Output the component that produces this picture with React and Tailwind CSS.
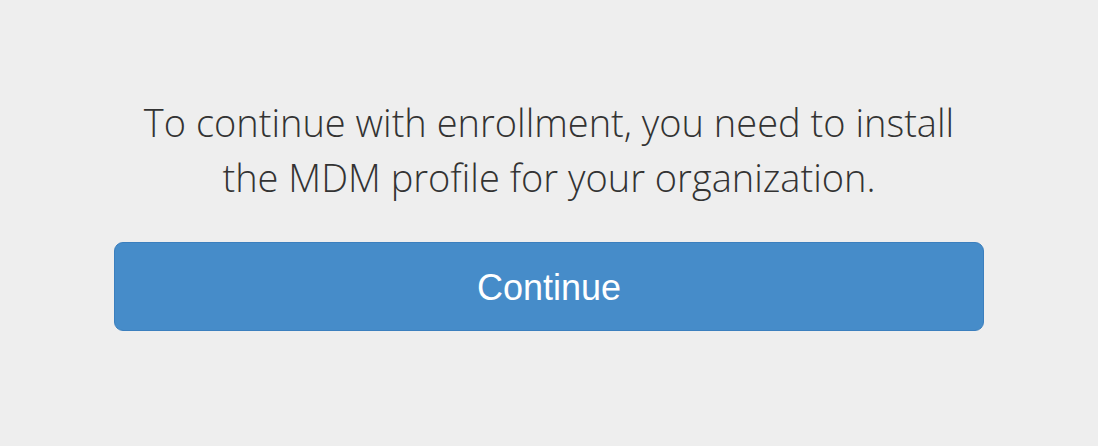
export default function App() {
  return (
    <div className="h-[446px] w-full bg-[#eeeeee] flex flex-col items-center pt-[95px]">
      <p className="text-center text-[#333333] text-[38px] leading-[55px] font-light font-['Open_Sans',sans-serif]">
        To continue with enrollment, you need to install
        <br />
        the MDM profile for your organization.
      </p>
      <button className="mt-[37px] w-[870px] h-[89px] rounded-[9px] bg-[#468cc9] border border-[#3b7fbe] text-white text-[36px] pt-[2px] font-['Liberation_Sans',sans-serif]">
        Continue
      </button>
    </div>
  );
}
